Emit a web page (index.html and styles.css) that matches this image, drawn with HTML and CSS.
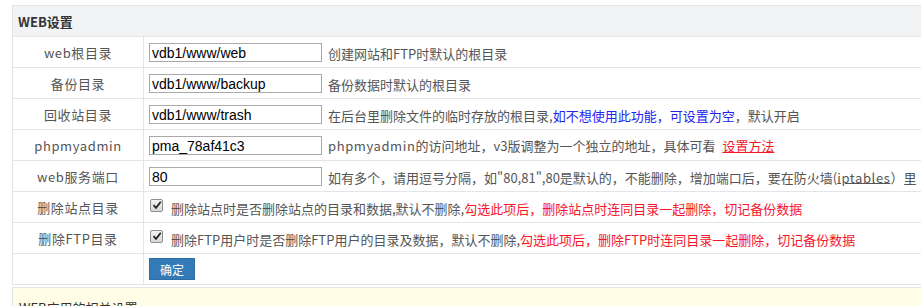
FILE: index.html
```html
<!DOCTYPE html>
<html lang="zh-CN">
<head>
    <meta charset="UTF-8">
    <title>WEB设置</title>
    <link rel="stylesheet" href="styles.css">
</head>
<body>
    <div class="panel">
        <table class="settings">
            <colgroup>
                <col class="col-label">
                <col>
            </colgroup>
            <tr>
                <th colspan="2" class="title">WEB设置</th>
            </tr>
            <tr>
                <td class="label">web根目录</td>
                <td><input type="text" class="field" value="vdb1/www/web"><span class="tip">创建网站和FTP时默认的根目录</span></td>
            </tr>
            <tr>
                <td class="label">备份目录</td>
                <td><input type="text" class="field" value="vdb1/www/backup"><span class="tip">备份数据时默认的根目录</span></td>
            </tr>
            <tr>
                <td class="label">回收站目录</td>
                <td><input type="text" class="field" value="vdb1/www/trash"><span class="tip">在后台里删除文件的临时存放的根目录,<span class="blue">如不想使用此功能，可设置为空</span>，默认开启</span></td>
            </tr>
            <tr>
                <td class="label">phpmyadmin</td>
                <td><input type="text" class="field" value="pma_78af41c3"><span class="tip"><span class="latin">phpmyadmin</span>的访问地址，v3版调整为一个独立的地址，具体可看 <a href="#" class="red-link">设置方法</a></span></td>
            </tr>
            <tr>
                <td class="label">web服务端口</td>
                <td><input type="text" class="field" value="80"><span class="tip">如有多个，请用逗号分隔，如"80,81",80是默认的，不能删除，增加端口后，要在防火墙(<u class="latin">iptables</u>）里</span></td>
            </tr>
            <tr>
                <td class="label">删除站点目录</td>
                <td><span class="check"><svg width="12" height="12" viewBox="0 0 12 12"><path d="M2.5 6.2 L5 8.8 L9.8 2.8" fill="none" stroke="#222" stroke-width="1.8"/></svg></span><span class="tip">删除站点时是否删除站点的目录和数据,默认不删除,<span class="red">勾选此项后，删除站点时连同目录一起删除，切记备份数据</span></span></td>
            </tr>
            <tr>
                <td class="label">删除FTP目录</td>
                <td><span class="check"><svg width="12" height="12" viewBox="0 0 12 12"><path d="M2.5 6.2 L5 8.8 L9.8 2.8" fill="none" stroke="#222" stroke-width="1.8"/></svg></span><span class="tip">删除FTP用户时是否删除FTP用户的目录及数据，默认不删除,<span class="red">勾选此项后，删除FTP时连同目录一起删除，切记备份数据</span></span></td>
            </tr>
            <tr>
                <td class="label"></td>
                <td><button type="button" class="btn">确定</button></td>
            </tr>
        </table>
        <div class="next">WEB应用的相关设置</div>
    </div>
</body>
</html>
```

FILE: styles.css
```css
body {
    margin: 0;
    padding: 5px 0 0 12px;
    overflow: hidden;
    background-color: #fff;
    font-family: "Noto Sans CJK SC", "Microsoft YaHei", sans-serif;
    font-size: 13px;
    color: #555;
}

.panel {
    width: 1000px;
}

.settings {
    width: 100%;
    border-collapse: collapse;
    table-layout: fixed;
}

.col-label {
    width: 131px;
}

.settings th,
.settings td {
    height: 30px;
    padding: 0 5px;
    border: 1px solid #e4e5e7;
    white-space: nowrap;
    overflow: hidden;
}

.settings .title {
    text-align: left;
    padding-left: 5px;
    background-color: #f2f3f5;
    color: #333;
    font-weight: bold;
}

.settings .label {
    text-align: center;
    letter-spacing: 0.6px;
}

.field {
    width: 167px;
    height: 15px;
    padding: 1px 2px;
    margin: 0 6px 0 0;
    border: 1px solid #a9a9a9;
    font-family: "Liberation Sans", Arial, sans-serif;
    font-size: 14px;
    color: #000;
    vertical-align: middle;
}

.tip {
    vertical-align: middle;
}

.latin {
    letter-spacing: 0.6px;
}

.blue {
    color: #2323f0;
}

.red,
.red-link {
    color: #f5162c;
}

.red-link {
    text-decoration: underline;
    margin-left: 4px;
}

.check {
    display: inline-block;
    width: 11px;
    height: 11px;
    margin: 0 8px 0 1px;
    border: 1px solid #8f8f8f;
    border-radius: 2px;
    background: linear-gradient(#f4f4f4, #d8d8d8);
    vertical-align: middle;
    position: relative;
    top: -2px;
}

.check svg {
    display: block;
    margin: -1px 0 0 0;
}

.btn {
    width: 46px;
    height: 22px;
    padding: 0;
    border: 1px solid #2e6da4;
    background-color: #337ab7;
    color: #fff;
    font-family: "Noto Sans CJK SC", sans-serif;
    font-size: 12px;
    vertical-align: middle;
}

.next {
    margin-top: 2px;
    padding: 10px 6px;
    border-top: 1px solid #e4e5e7;
    border-left: 1px solid #e4e5e7;
    background-color: #fffde6;
    color: #333;
}
```
